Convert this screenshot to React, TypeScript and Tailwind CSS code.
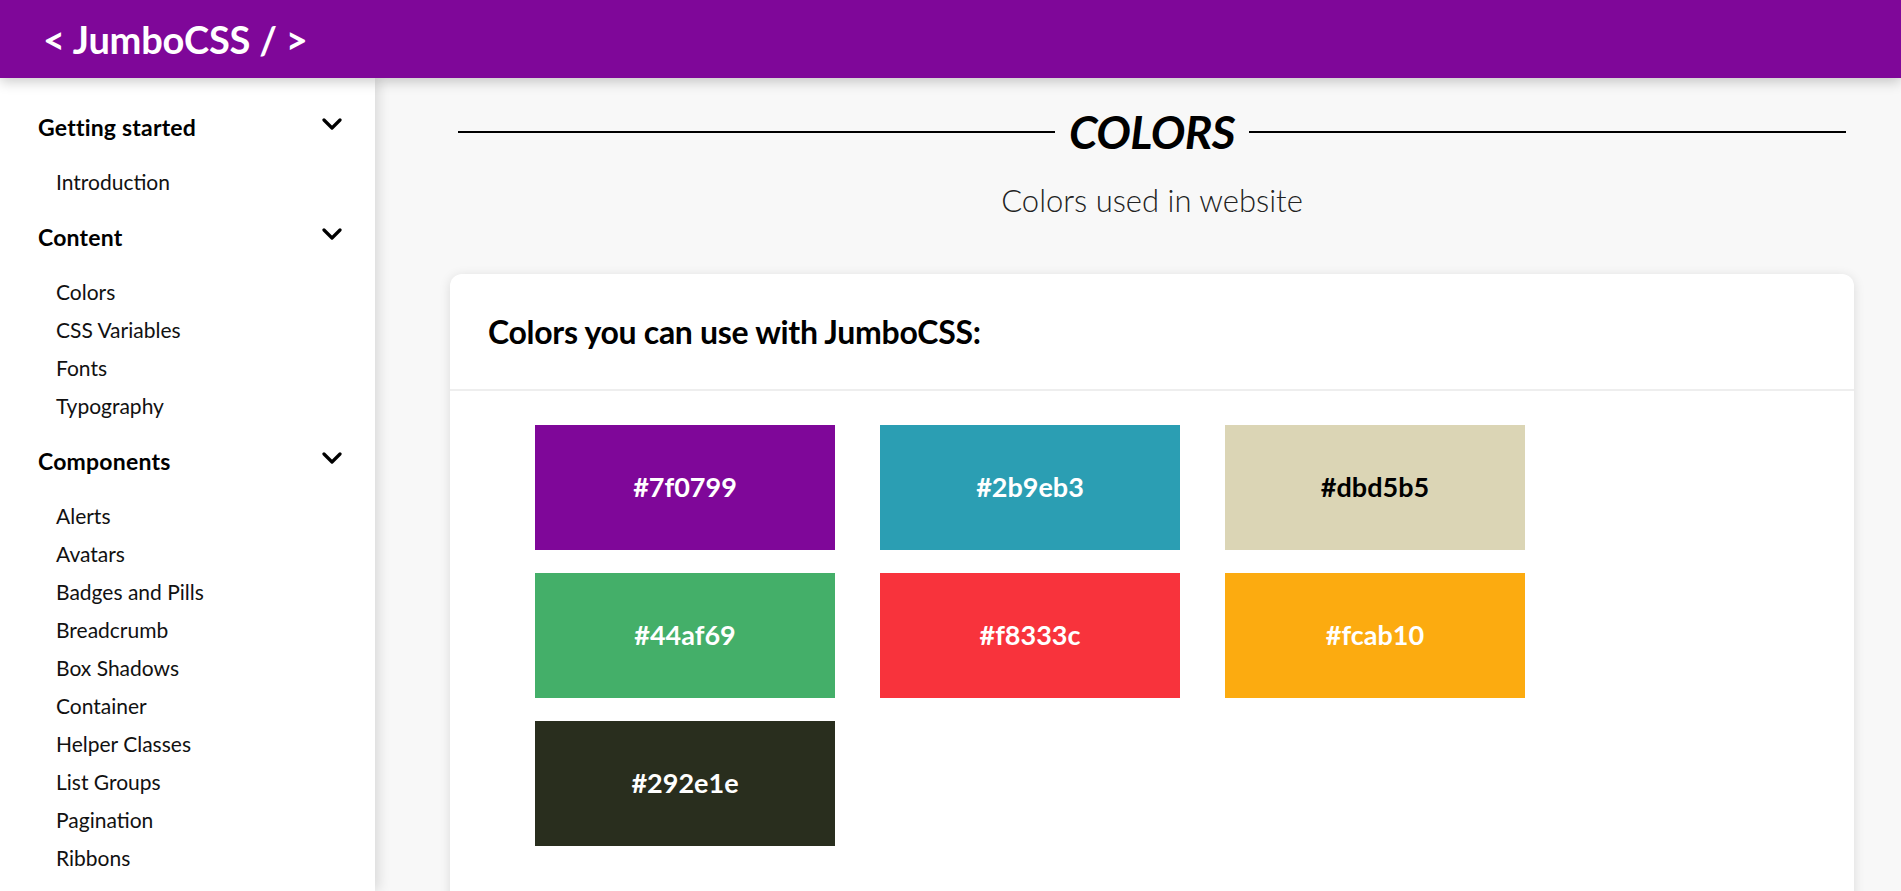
import React from 'react';

const sections = [
  { title: 'Getting started', items: ['Introduction'] },
  { title: 'Content', items: ['Colors', 'CSS Variables', 'Fonts', 'Typography'] },
  {
    title: 'Components',
    items: [
      'Alerts',
      'Avatars',
      'Badges and Pills',
      'Breadcrumb',
      'Box Shadows',
      'Container',
      'Helper Classes',
      'List Groups',
      'Pagination',
      'Ribbons',
    ],
  },
];

const swatches = [
  { hex: '#7f0799', bg: 'bg-[#7f0799]', text: 'text-white' },
  { hex: '#2b9eb3', bg: 'bg-[#2b9eb3]', text: 'text-white' },
  { hex: '#dbd5b5', bg: 'bg-[#dbd5b5]', text: 'text-black' },
  { hex: '#44af69', bg: 'bg-[#44af69]', text: 'text-white' },
  { hex: '#f8333c', bg: 'bg-[#f8333c]', text: 'text-white' },
  { hex: '#fcab10', bg: 'bg-[#fcab10]', text: 'text-white' },
  { hex: '#292e1e', bg: 'bg-[#292e1e]', text: 'text-white' },
];

function Chevron() {
  return (
    <svg width="20" height="12" viewBox="0 0 20 12" fill="none" className="mb-[6px]">
      <polyline points="2,2 10,10 18,2" stroke="#000" strokeWidth="3.2" strokeLinecap="round" strokeLinejoin="round" />
    </svg>
  );
}

export default function App() {
  return (
    <div className="h-screen flex flex-col overflow-hidden font-['Lato','Liberation_Sans',sans-serif] text-black">
      <header className="relative z-20 h-[78px] shrink-0 bg-[#7f0799] px-[43px] flex items-center shadow-[0_4px_12px_rgba(0,0,0,0.2)]">
        <h1 className="text-white text-[38px] font-bold tracking-[-0.2px]">&lt; JumboCSS / &gt;</h1>
      </header>

      <div className="flex flex-1 min-h-0">
        <aside className="relative z-10 w-[375px] shrink-0 bg-white pt-[30px] pl-[38px] pr-[33px] overflow-hidden shadow-[4px_0_12px_rgba(0,0,0,0.12)]">
          <div className="flex flex-col gap-[17px]">
            {sections.map((s) => (
              <div key={s.title}>
                <div className="h-[38px] flex items-center justify-between">
                  <span className="text-[23px] font-bold tracking-[0.2px]">{s.title}</span>
                  <Chevron />
                </div>
                <ul className="mt-[17px] pl-[18px]">
                  {s.items.map((it) => (
                    <li key={it} className="h-[38px] flex items-center text-[21px] text-[#111]">
                      {it}
                    </li>
                  ))}
                </ul>
              </div>
            ))}
          </div>
        </aside>

        <main className="flex-1 bg-[#f8f8f8] pl-[75px] pr-[47px] pt-[23px] overflow-hidden">
          <div className="flex items-center gap-[14px] px-[8px]">
            <div className="flex-1 h-[2px] bg-black" />
            <h2 className="text-[46px] font-bold italic leading-[62px] tracking-[-0.5px]">COLORS</h2>
            <div className="flex-1 h-[2px] bg-black" />
          </div>
          <p className="mt-[18px] text-center text-[31px] font-light text-[#222] leading-[38px]">Colors used in website</p>

          <section className="mt-[55px] bg-white rounded-[12px] shadow-[0_2px_12px_rgba(0,0,0,0.12)]">
            <div className="h-[117px] px-[38px] flex items-center border-b-2 border-[#eeeeee]">
              <h3 className="text-[32px] font-bold tracking-[-0.3px]">Colors you can use with JumboCSS:</h3>
            </div>
            <div className="pt-[34px] pb-[120px] pl-[85px] grid grid-cols-[300px_300px_300px] gap-x-[45px] gap-y-[23px]">
              {swatches.map((c) => (
                <div
                  key={c.hex}
                  className={`${c.bg} ${c.text} h-[125px] flex items-center justify-center text-[27px] font-bold`}
                >
                  {c.hex}
                </div>
              ))}
            </div>
          </section>
        </main>
      </div>
    </div>
  );
}
